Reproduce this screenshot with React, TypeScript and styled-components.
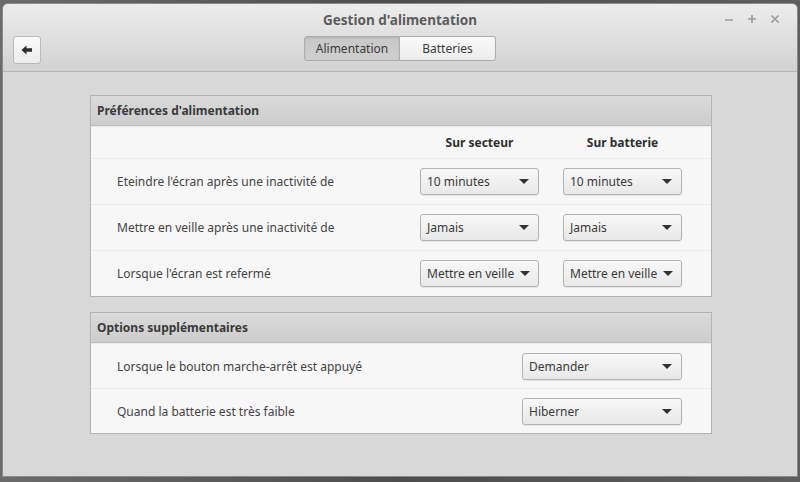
import React from 'react';
import styled, { createGlobalStyle } from 'styled-components';

const GlobalStyle = createGlobalStyle`
  html, body {
    margin: 0;
    padding: 0;
    background: #4a4a4a;
    font-family: 'Noto Sans', 'DejaVu Sans', sans-serif;
  }
`;

const Screen = styled.div`
  width: 800px;
  height: 482px;
  padding: 4px 3px 6px 3px;
  box-sizing: border-box;
  background: linear-gradient(90deg, #6b6b6b, #4d4d4d 50%, #5e5e5e);
`;

const Window = styled.div`
  height: 100%;
  display: flex;
  flex-direction: column;
  border-radius: 5px 5px 0 0;
  overflow: hidden;
  background: #d8d8d8;
  box-shadow: 0 0 0 1px #8a8a8a;
`;

const HeaderBar = styled.div`
  height: 67px;
  flex: none;
  display: grid;
  grid-template-rows: 28px 1fr;
  background: linear-gradient(180deg, #ececec, #d2d2d2);
  border-bottom: 1px solid #b4b4b4;
`;

const TitleRow = styled.div`
  display: grid;
  grid-template-columns: 1fr auto 1fr;
  align-items: center;
`;

const Title = styled.div`
  grid-column: 2;
  font-size: 13.5px;
  font-weight: 700;
  color: #5c5c5c;
  padding-top: 3px;
`;

const Controls = styled.div`
  justify-self: end;
  display: flex;
  gap: 11px;
  padding-right: 16px;
  padding-top: 2px;
`;

const ToolRow = styled.div`
  display: grid;
  grid-template-columns: 1fr auto 1fr;
  align-items: start;
  padding: 4px 10px 0 10px;
`;

const BackButton = styled.div`
  width: 26px;
  height: 26px;
  border: 1px solid #b9b9b9;
  border-radius: 3px;
  background: linear-gradient(180deg, #fafafa, #ececec);
  display: flex;
  align-items: center;
  justify-content: center;
`;

const Switcher = styled.div`
  display: flex;
`;

const SwitchTab = styled.div<{ $active?: boolean }>`
  width: 96px;
  height: 25px;
  box-sizing: border-box;
  display: flex;
  align-items: center;
  justify-content: center;
  font-size: 12px;
  color: #3c3c3c;
  border: 1px solid #adadad;
  background: ${({ $active }) => ($active ? 'linear-gradient(180deg, #c8c8c8, #cfcfcf)' : 'linear-gradient(180deg, #fafafa, #ececec)')};
  box-shadow: ${({ $active }) => ($active ? 'inset 0 1px 2px rgba(0,0,0,0.12)' : 'none')};
  &:first-child {
    border-radius: 3px 0 0 3px;
  }
  &:last-child {
    border-radius: 0 3px 3px 0;
    border-left: none;
  }
`;

const Content = styled.div`
  flex: 1;
  display: flex;
  flex-direction: column;
  gap: 15px;
  padding: 23px 0 0 87px;
`;

const Frame = styled.div`
  width: 620px;
  border: 1px solid #b3b3b3;
  background: #f7f7f7;
`;

const FrameHeader = styled.div`
  height: 29px;
  display: flex;
  align-items: center;
  padding-left: 6px;
  font-size: 12px;
  font-weight: 700;
  color: #3a3a3a;
  background: linear-gradient(180deg, #dadada, #cdcdcd);
  border-bottom: 1px solid #bdbdbd;
`;

const Row = styled.div<{ $height: number }>`
  height: ${({ $height }) => $height}px;
  display: grid;
  grid-template-columns: 1fr 119px 24px 119px;
  align-items: center;
  padding: 0 29px 0 26px;
  border-top: 1px solid #ebebeb;
`;

const WideRow = styled(Row)`
  grid-template-columns: 1fr 160px;
`;

const Label = styled.div`
  font-size: 12px;
  color: #444;
`;

const ColumnTitle = styled.div<{ $col: number }>`
  grid-column: ${({ $col }) => $col};
  text-align: center;
  font-size: 12px;
  font-weight: 700;
  color: #2f2f2f;
`;

const Combo = styled.div<{ $col?: number }>`
  grid-column: ${({ $col }) => $col ?? 'auto'};
  height: 27px;
  box-sizing: border-box;
  display: flex;
  align-items: center;
  justify-content: space-between;
  padding: 0 9px 0 6px;
  border: 1px solid #b3b3b3;
  border-radius: 3px;
  background: linear-gradient(180deg, #f8f8f8, #e8e8e8);
  box-shadow: 0 1px 1px rgba(0, 0, 0, 0.08);
  font-size: 12px;
  color: #3a3a3a;
  white-space: nowrap;
`;

const Arrow = styled.span`
  width: 0;
  height: 0;
  border-left: 5px solid transparent;
  border-right: 5px solid transparent;
  border-top: 5px solid #333;
  margin-left: 6px;
  flex: none;
`;

const ControlGlyph = styled.svg`
  display: block;
`;

const Dropdown: React.FC<{ value: string; col?: number }> = ({ value, col }) => (
  <Combo $col={col}>
    <span>{value}</span>
    <Arrow />
  </Combo>
);

const prefs = [
  { label: "Eteindre l'écran après une inactivité de", ac: '10 minutes', bat: '10 minutes' },
  { label: 'Mettre en veille après une inactivité de', ac: 'Jamais', bat: 'Jamais' },
  { label: "Lorsque l'écran est refermé", ac: 'Mettre en veille', bat: 'Mettre en veille' },
];

const extras = [
  { label: 'Lorsque le bouton marche-arrêt est appuyé', value: 'Demander' },
  { label: 'Quand la batterie est très faible', value: 'Hiberner' },
];

export default function App() {
  return (
    <>
      <GlobalStyle />
      <Screen>
        <Window>
          <HeaderBar>
            <TitleRow>
              <Title>Gestion d'alimentation</Title>
              <Controls>
                <ControlGlyph width="12" height="12" viewBox="0 0 12 12">
                  <path d="M2 7h8" stroke="#9a9a9a" strokeWidth="1.6" />
                </ControlGlyph>
                <ControlGlyph width="12" height="12" viewBox="0 0 12 12">
                  <path d="M2 6h8M6 2v8" stroke="#9a9a9a" strokeWidth="1.6" />
                </ControlGlyph>
                <ControlGlyph width="12" height="12" viewBox="0 0 12 12">
                  <path d="M2.5 2.5l7 7M9.5 2.5l-7 7" stroke="#9a9a9a" strokeWidth="1.6" />
                </ControlGlyph>
              </Controls>
            </TitleRow>
            <ToolRow>
              <BackButton>
                <svg width="12" height="10" viewBox="0 0 12 10">
                  <path d="M0.5 5L5.5 0.5V3.2H11V6.8H5.5V9.5Z" fill="#2b2b2b" />
                </svg>
              </BackButton>
              <Switcher>
                <SwitchTab $active>Alimentation</SwitchTab>
                <SwitchTab>Batteries</SwitchTab>
              </Switcher>
            </ToolRow>
          </HeaderBar>
          <Content>
            <Frame>
              <FrameHeader>Préférences d'alimentation</FrameHeader>
              <Row $height={31}>
                <ColumnTitle $col={2}>Sur secteur</ColumnTitle>
                <ColumnTitle $col={4}>Sur batterie</ColumnTitle>
              </Row>
              {prefs.map(p => (
                <Row key={p.label} $height={45}>
                  <Label>{p.label}</Label>
                  <Dropdown value={p.ac} col={2} />
                  <Dropdown value={p.bat} col={4} />
                </Row>
              ))}
            </Frame>
            <Frame>
              <FrameHeader>Options supplémentaires</FrameHeader>
              {extras.map(e => (
                <WideRow key={e.label} $height={44}>
                  <Label>{e.label}</Label>
                  <Dropdown value={e.value} />
                </WideRow>
              ))}
            </Frame>
          </Content>
        </Window>
      </Screen>
    </>
  );
}
